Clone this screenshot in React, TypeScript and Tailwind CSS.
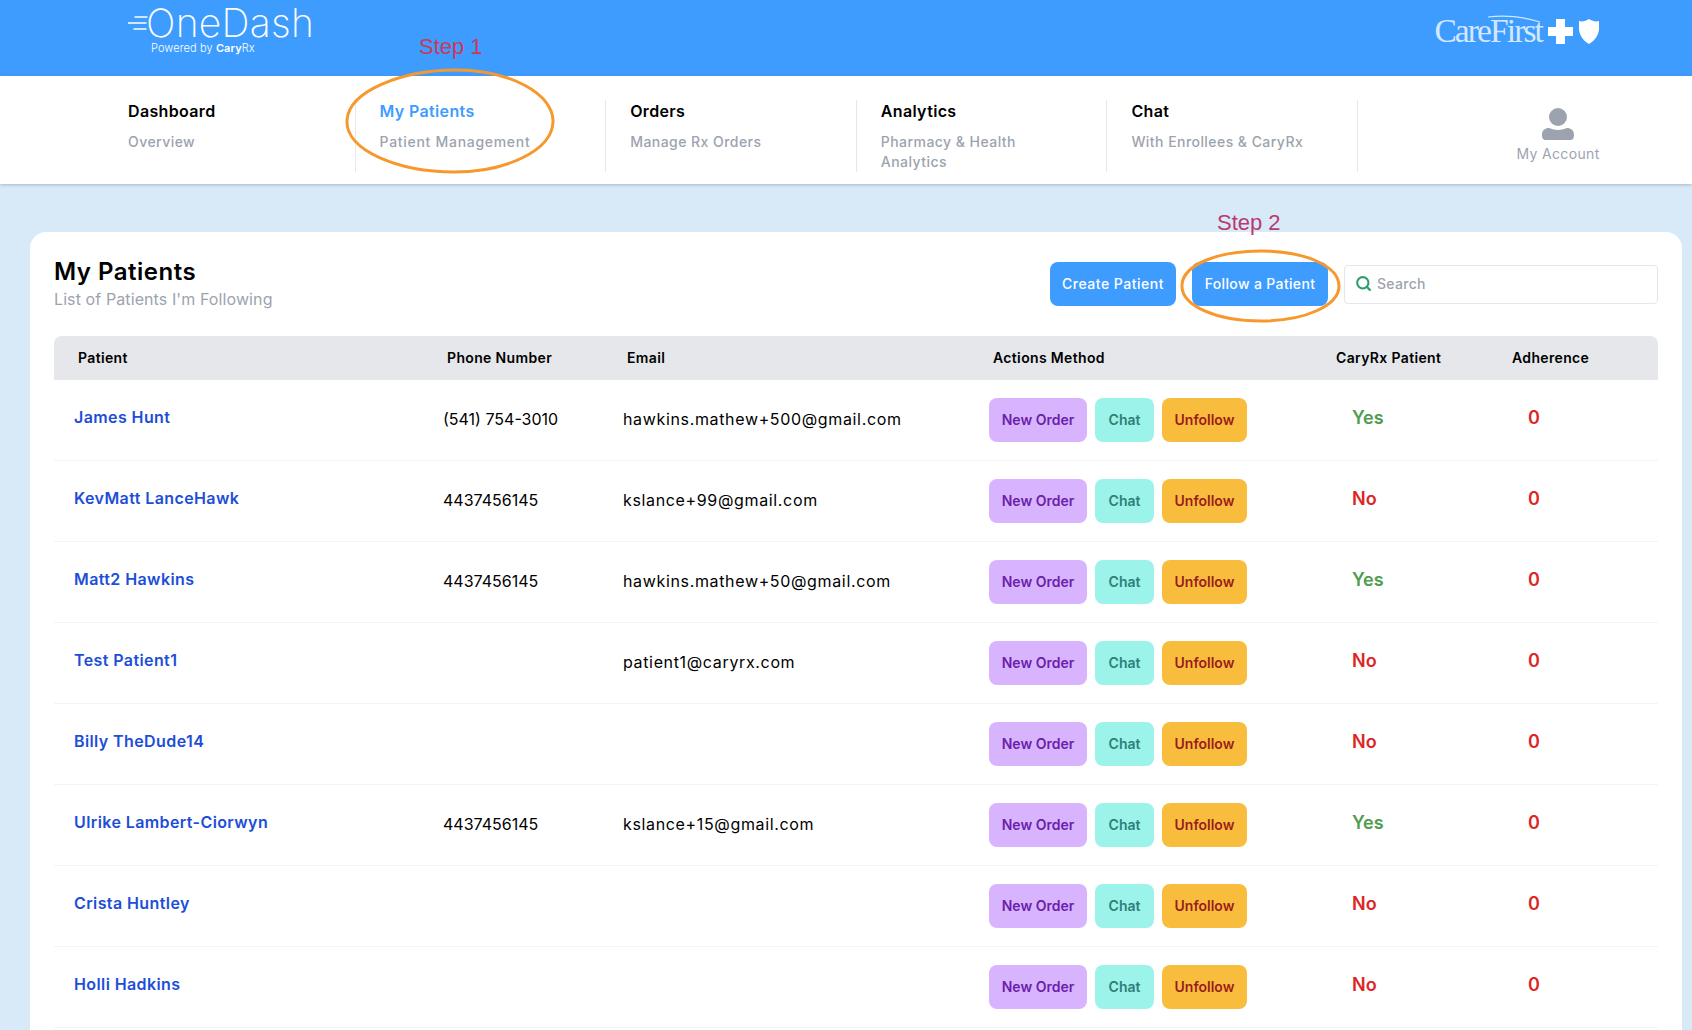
import { Search } from "lucide-react";

const navItems = [
  { title: "Dashboard", sub: "Overview" },
  { title: "My Patients", sub: "Patient Management", active: true },
  { title: "Orders", sub: "Manage Rx Orders" },
  { title: "Analytics", sub: "Pharmacy & Health Analytics" },
  { title: "Chat", sub: "With Enrollees & CaryRx" },
];

const patients = [
  { name: "James Hunt", phone: "(541) 754-3010", email: "hawkins.mathew+500@gmail.com", cary: true },
  { name: "KevMatt LanceHawk", phone: "4437456145", email: "kslance+99@gmail.com", cary: false },
  { name: "Matt2 Hawkins", phone: "4437456145", email: "hawkins.mathew+50@gmail.com", cary: true },
  { name: "Test Patient1", phone: "", email: "patient1@caryrx.com", cary: false },
  { name: "Billy TheDude14", phone: "", email: "", cary: false },
  { name: "Ulrike Lambert-Ciorwyn", phone: "4437456145", email: "kslance+15@gmail.com", cary: true },
  { name: "Crista Huntley", phone: "", email: "", cary: false },
  { name: "Holli Hadkins", phone: "", email: "", cary: false },
];

const columns = "grid grid-cols-[369px_180px_366px_343px_176px_1fr]";

function Logo() {
  return (
    <div className="relative w-[200px] h-[76px] text-white">
      <svg className="absolute left-0 top-[15px]" width="20" height="16" viewBox="0 0 20 16" fill="none" stroke="white" strokeWidth="1.4" strokeLinecap="round">
        <path d="M7 2h12M0 8h18M6 14h12" />
      </svg>
      <span className="absolute left-[18px] top-[5px] text-[39px] leading-[36px] font-[250] tracking-[0.3px] whitespace-nowrap">
        OneDash
      </span>
      <span className="absolute left-[23px] top-[41px] text-[11px] leading-[14px] font-light tracking-[0.1px] whitespace-nowrap">
        Powered by <span className="font-semibold">Cary</span>Rx
      </span>
    </div>
  );
}

function CareFirst() {
  return (
    <div className="flex items-center gap-[6px] text-white">
      <div className="relative">
        <span className="text-[33.5px] leading-[34px] font-['Liberation_Serif',serif] tracking-[-1.9px] text-[#d3e8ff]">CareFirst</span>
        <svg className="absolute left-[52px] top-[1px]" width="56" height="8" viewBox="0 0 56 8" fill="none" stroke="#d3e8ff" strokeWidth="1.2">
          <path d="M2 2c16-2 36 0 52 5" />
        </svg>
      </div>
      <svg width="25" height="25" viewBox="0 0 25 25" fill="white">
        <path d="M8 0h9v8h8v9h-8v8H8v-8H0V8h8z" />
      </svg>
      <svg width="20" height="25" viewBox="0 0 20 25" fill="white">
        <path d="M0 2c3 1 7 0 10-2 3 2 7 3 10 2 1 8 0 17-10 23C0 19-1 10 0 2z" />
      </svg>
    </div>
  );
}

function Nav() {
  return (
    <nav className="relative z-10 h-[108px] bg-white shadow-[0_1px_3px_rgba(100,116,139,0.4)] pl-[104px] flex">
      {navItems.map((item, i) => (
        <div key={item.title} className={`relative w-[250.6px] pt-[24px] pr-9 ${i > 0 ? "pl-[25px]" : "pl-[24px]"}`}>
          {i > 0 && <div className="absolute left-0 top-[24px] h-[72px] w-px bg-gray-200" />}
          <p className={`text-[16px] leading-[22px] font-semibold tracking-[0.35px] ${item.active ? "text-[#3e9cff]" : "text-black"}`}>{item.title}</p>
          <p className={`mt-[10px] text-[14px] leading-[20px] font-medium text-[#9ca3af] ${item.active ? "tracking-[0.7px]" : "tracking-[0.45px]"}`}>{item.sub}</p>
        </div>
      ))}
      <div className="flex-1 border-l border-gray-200 mt-[24px] h-[72px] pl-[66px] flex flex-col items-center">
        <svg width="32" height="33" viewBox="0 0 32 33" fill="#9ca3af" className="mt-[8px]">
          <circle cx="16" cy="9" r="9" />
          <path d="M0 27c0-5 3-7 7-7 3 1 6 2 9 2s6-1 9-2c4 0 7 2 7 7 0 3-1 5-4 5H4c-3 0-4-2-4-5z" />
        </svg>
        <span className="mt-[3px] text-[14px] leading-[20px] tracking-[0.35px] text-[#9ca3af] whitespace-nowrap">My Account</span>
      </div>
    </nav>
  );
}

function Toolbar() {
  return (
    <div className="flex justify-between px-6 pt-[25px] h-[104px]">
      <div>
        <h1 className="text-[24px] leading-[30px] font-semibold tracking-[0.5px] text-black">My Patients</h1>
        <p className="mt-px text-[16px] leading-[22px] tracking-[0.1px] text-[#9ca3af]">List of Patients I'm Following</p>
      </div>
      <div className="flex gap-4 items-start pt-[5px]">
        <button className="h-11 w-[126px] rounded-lg bg-[#3e9cff] pb-0.5 text-[14px] font-medium tracking-[0.5px] text-white">Create Patient</button>
        <button className="h-11 w-[136px] rounded-lg bg-[#3e9cff] pb-0.5 text-[14px] font-medium tracking-[0.35px] text-white">Follow a Patient</button>
        <div className="mt-[3px] flex h-[39px] w-[314px] items-center gap-[5px] rounded border border-gray-200 pb-0.5 pl-[10px]">
          <Search size={17} strokeWidth={3} className="text-[#2f9e6e]" />
          <span className="text-[14px] font-medium tracking-[0.3px] text-[#9ca3af]">Search</span>
        </div>
      </div>
    </div>
  );
}

function PatientRow({ p }: { p: (typeof patients)[number] }) {
  return (
    <div className={`${columns} h-[81px] border-b border-gray-100 pl-5 text-black`}>
      <p className="-mr-5 pt-[25px] text-[16px] leading-[24px] font-semibold tracking-[0.4px] text-[#1d4ed8]">{p.name}</p>
      <p className="pt-[27px] text-[16px] leading-[24px]">{p.phone}</p>
      <p className="pt-[27px] text-[16px] leading-[24px] tracking-[0.65px]">{p.email}</p>
      <div className="flex gap-2 pt-[18px] text-[14px] font-semibold">
        <button className="h-11 w-[98px] rounded-lg bg-[#d8b4fe] pb-0.5 text-[#6b21a8]">New Order</button>
        <button className="h-11 w-[59px] rounded-lg bg-[#9bf3ea] pb-0.5 text-[#2f7f78]">Chat</button>
        <button className="h-11 w-[85px] rounded-lg bg-[#f9bd3e] pb-0.5 text-[#9b1c1c]">Unfollow</button>
      </div>
      <p className={`pl-5 pt-[26px] text-[18px] leading-[24px] font-semibold ${p.cary ? "text-[#4f9d4f]" : "text-[#dc2626]"}`}>{p.cary ? "Yes" : "No"}</p>
      <p className="pl-5 pt-[26px] text-[18px] leading-[24px] font-semibold text-[#dc2626]">0</p>
    </div>
  );
}

function Annotations() {
  return (
    <>
      <span className="absolute left-[419px] top-[33px] z-20 text-[22px] leading-[28px] font-['Liberation_Sans',sans-serif] text-[#c93a5b]">Step 1</span>
      <svg className="absolute left-[344px] top-[67px] z-20" width="212" height="108" viewBox="0 0 212 108" fill="none" stroke="#f7982d" strokeWidth="3">
        <path d="M3 53C5 24 58 3 112 3c54 0 98 24 97 52 -1 28-46 50-99 50C56 105 1 84 3 53z" />
      </svg>
      <span className="absolute left-[1217px] top-[209px] z-20 text-[22px] leading-[28px] font-['Liberation_Sans',sans-serif] text-[#b83a6f]">Step 2</span>
      <svg className="absolute left-[1179px] top-[248px] z-20" width="163" height="76" viewBox="0 0 163 76" fill="none" stroke="#f7982d" strokeWidth="3">
        <path d="M3 37C4 17 38 3 82 3c44 0 78 15 78 35 0 20-35 35-78 35C38 73 2 58 3 37z" />
      </svg>
    </>
  );
}

export default function App() {
  return (
    <div className="relative h-screen overflow-hidden bg-[#d8e9f8] font-['Inter',sans-serif]">
      <header className="flex h-[76px] items-start justify-between bg-[#3e9cff] pl-[128px] pr-[93px]">
        <Logo />
        <div className="pt-[14px]">
          <CareFirst />
        </div>
      </header>
      <Nav />
      <main className="ml-[30px] mr-[10px] mt-[48px] rounded-2xl bg-white pb-10">
        <Toolbar />
        <div className="mx-6">
          <div className={`${columns} h-[44px] items-center rounded-t-lg bg-gray-200 pb-0.5 pl-6 text-[14px] font-semibold tracking-[0.35px] text-black`}>
            <span>Patient</span>
            <span>Phone Number</span>
            <span>Email</span>
            <span>Actions Method</span>
            <span>CaryRx Patient</span>
            <span>Adherence</span>
          </div>
          {patients.map((p) => (
            <PatientRow key={p.name} p={p} />
          ))}
        </div>
      </main>
      <Annotations />
    </div>
  );
}
